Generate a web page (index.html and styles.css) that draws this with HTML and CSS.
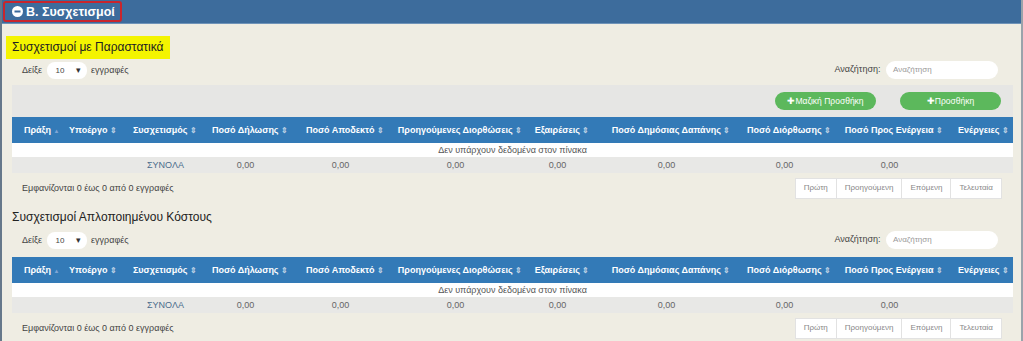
FILE: index.html
```html
<!DOCTYPE html>
<html>
<head>
    <meta charset="utf-8">
    <link rel="stylesheet" href="styles.css">
</head>
<body>
    <div class="page">
        <div class="topbar">
            <span class="toggle">
                <svg class="minus" width="11" height="11" viewBox="0 0 11 11">
                    <circle cx="5.5" cy="5.5" r="5.5" fill="#fff"/>
                    <rect x="2.5" y="4.5" width="6" height="2" fill="#3b6a9b"/>
                </svg>
                Β. Συσχετισμοί
            </span>
        </div>

        <div class="content">
            <!-- Πρώτος πίνακας -->
            <h2 class="title marked">Συσχετισμοί με Παραστατικά</h2>
            <div class="controls">
                <div class="length">Δείξε <span class="select">10 <i>&#9662;</i></span> εγγραφές</div>
                <div class="search">Αναζήτηση: <span class="input">Αναζήτηση</span></div>
            </div>
            <div class="toolbar">
                <span class="btn wide">&#10010;Μαζική Προσθήκη</span>
                <span class="btn">&#10010;Προσθήκη</span>
            </div>
            <table class="grid">
                <thead>
                    <tr>
                        <th class="w1">Πράξη <i class="sort up">&#9650;</i></th>
                        <th class="w2">Υποέργο <i class="sort">&#8661;</i></th>
                        <th class="w3">Συσχετισμός <i class="sort">&#8661;</i></th>
                        <th class="w4">Ποσό Δήλωσης <i class="sort">&#8661;</i></th>
                        <th class="w5">Ποσό Αποδεκτό <i class="sort">&#8661;</i></th>
                        <th class="w6">Προηγούμενες Διορθώσεις <i class="sort">&#8661;</i></th>
                        <th class="w7">Εξαιρέσεις <i class="sort">&#8661;</i></th>
                        <th class="w8">Ποσό Δημόσιας Δαπάνης <i class="sort">&#8661;</i></th>
                        <th class="w9">Ποσό Διόρθωσης <i class="sort">&#8661;</i></th>
                        <th class="w10">Ποσό Προς Ενέργεια <i class="sort">&#8661;</i></th>
                        <th class="w11">Ενέργειες <i class="sort">&#8661;</i></th>
                    </tr>
                </thead>
                <tbody>
                    <tr class="empty"><td colspan="11">Δεν υπάρχουν δεδομένα στον πίνακα</td></tr>
                </tbody>
                <tfoot>
                    <tr>
                        <td></td><td></td><td>ΣΥΝΟΛΑ</td><td>0,00</td><td>0,00</td><td>0,00</td>
                        <td>0,00</td><td>0,00</td><td>0,00</td><td>0,00</td><td></td>
                    </tr>
                </tfoot>
            </table>
            <div class="info-row">
                <div class="info">Εμφανίζονται 0 έως 0 από 0 εγγραφές</div>
                <div class="pager">
                    <span>Πρώτη</span><span>Προηγούμενη</span><span>Επόμενη</span><span>Τελευταία</span>
                </div>
            </div>

            <!-- Δεύτερος πίνακας -->
            <h2 class="title">Συσχετισμοί Απλοποιημένου Κόστους</h2>
            <div class="controls">
                <div class="length">Δείξε <span class="select">10 <i>&#9662;</i></span> εγγραφές</div>
                <div class="search">Αναζήτηση: <span class="input">Αναζήτηση</span></div>
            </div>
            <table class="grid second">
                <thead>
                    <tr>
                        <th class="w1">Πράξη <i class="sort up">&#9650;</i></th>
                        <th class="w2">Υποέργο <i class="sort">&#8661;</i></th>
                        <th class="w3">Συσχετισμός <i class="sort">&#8661;</i></th>
                        <th class="w4">Ποσό Δήλωσης <i class="sort">&#8661;</i></th>
                        <th class="w5">Ποσό Αποδεκτό <i class="sort">&#8661;</i></th>
                        <th class="w6">Προηγούμενες Διορθώσεις <i class="sort">&#8661;</i></th>
                        <th class="w7">Εξαιρέσεις <i class="sort">&#8661;</i></th>
                        <th class="w8">Ποσό Δημόσιας Δαπάνης <i class="sort">&#8661;</i></th>
                        <th class="w9">Ποσό Διόρθωσης <i class="sort">&#8661;</i></th>
                        <th class="w10">Ποσό Προς Ενέργεια <i class="sort">&#8661;</i></th>
                        <th class="w11">Ενέργειες <i class="sort">&#8661;</i></th>
                    </tr>
                </thead>
                <tbody>
                    <tr class="empty"><td colspan="11">Δεν υπάρχουν δεδομένα στον πίνακα</td></tr>
                </tbody>
                <tfoot>
                    <tr>
                        <td></td><td></td><td>ΣΥΝΟΛΑ</td><td>0,00</td><td>0,00</td><td>0,00</td>
                        <td>0,00</td><td>0,00</td><td>0,00</td><td>0,00</td><td></td>
                    </tr>
                </tfoot>
            </table>
            <div class="info-row">
                <div class="info">Εμφανίζονται 0 έως 0 από 0 εγγραφές</div>
                <div class="pager">
                    <span>Πρώτη</span><span>Προηγούμενη</span><span>Επόμενη</span><span>Τελευταία</span>
                </div>
            </div>
        </div>
    </div>
</body>
</html>
```
FILE: styles.css
```css
*{
    margin: 0;
    box-sizing: border-box;
}
body {
    font-family: "Liberation Sans", Arial, sans-serif;
    background-color: #efede3;
    color: #444;
}
.page {
    border-left: 2px solid #66788a;
    border-right: 2px solid #9aa3ab;
    height: 341px;
    overflow: hidden;
}
.topbar {
    height: 24px;
    background-color: #3d6c9c;
    border-bottom: 1px solid #6f93b8;
    padding: 1px 0 0 1px;
}
.toggle {
    display: inline-flex;
    align-items: center;
    gap: 3px;
    height: 21px;
    padding: 0 5px 0 7px;
    border: 2px solid #c9252c;
    border-radius: 3px;
    color: #fff;
    font-weight: bold;
    font-size: 12.5px;
}
.content {
    padding: 0 8px 0 10px;
}
.title {
    font-size: 12px;
    font-weight: normal;
    color: #222;
    line-height: 23px;
    display: inline-block;
    margin-top: 12px;
}
.title.marked {
    background-color: #f4f400;
    padding: 0 6px;
    margin-left: -6px;
}
.content .title:not(.marked) {
    margin-top: 3px;
    display: block;
}
.controls {
    display: flex;
    justify-content: space-between;
    align-items: center;
    height: 22px;
    padding: 0 15px 0 10px;
    font-size: 9px;
    color: #444;
}
.select {
    display: inline-flex;
    justify-content: space-between;
    align-items: center;
    width: 40px;
    height: 17px;
    margin: 0 2px;
    padding: 0 6px 0 9px;
    background-color: #fff;
    border-radius: 8px;
    font-size: 8px;
}
.select i {
    font-style: normal;
    font-size: 9px;
    color: #333;
}
.input {
    display: inline-block;
    width: 112px;
    height: 18px;
    line-height: 18px;
    margin-left: 3px;
    padding-left: 7px;
    background-color: #fff;
    border-radius: 9px;
    font-size: 8px;
    color: #999;
}
.toolbar {
    display: flex;
    justify-content: flex-end;
    gap: 24px;
    height: 32px;
    align-items: center;
    padding-right: 12px;
    margin-top: 4px;
    background-color: #e6e6e4;
}
.btn {
    display: inline-block;
    width: 101px;
    height: 18px;
    line-height: 18px;
    text-align: center;
    background-color: #5cb85c;
    color: #fff;
    border-radius: 9px;
    font-size: 8.5px;
}
.grid {
    width: 1001px;
    border-collapse: collapse;
    table-layout: fixed;
    font-size: 9px;
}
.grid.second {
    margin-top: 6px;
}
.grid th {
    height: 26px;
    background-color: #337ab7;
    color: #fff;
    font-size: 9px;
    font-weight: bold;
    white-space: nowrap;
    text-align: center;
}
.grid th.w1 {
    padding-left: 12px;
}
.sort {
    font-style: normal;
    font-size: 8px;
    color: #b9cfe4;
}
.sort.up {
    font-size: 6px;
    color: #7fa6d6;
}
.w1 { width: 48px; }
.w2 { width: 66px; }
.w3 { width: 78px; }
.w4 { width: 92px; }
.w5 { width: 98px; }
.w6 { width: 132px; }
.w7 { width: 72px; }
.w8 { width: 146px; }
.w9 { width: 90px; }
.w10 { width: 120px; }
.w11 { width: 59px; }
.empty td {
    height: 14px;
    background-color: #fff;
    text-align: center;
    color: #555;
}
.grid tfoot td {
    height: 16px;
    background-color: #e8e8e6;
    text-align: center;
    color: #666;
    padding-right: 10px;
}
.grid tfoot td:nth-child(3) {
    color: #4a6c8c;
    padding-right: 0;
}
.info-row {
    display: flex;
    justify-content: space-between;
    align-items: center;
    height: 30px;
    padding: 0 11px 0 10px;
}
.info {
    font-size: 9px;
    color: #444;
}
.pager {
    display: flex;
    background-color: #fff;
    border: 1px solid #e2e2e2;
}
.pager span {
    height: 19px;
    line-height: 18px;
    padding: 0 8px;
    border-left: 1px solid #e2e2e2;
    font-size: 8px;
    color: #888;
}
.pager span:first-child {
    border-left: none;
}
```
